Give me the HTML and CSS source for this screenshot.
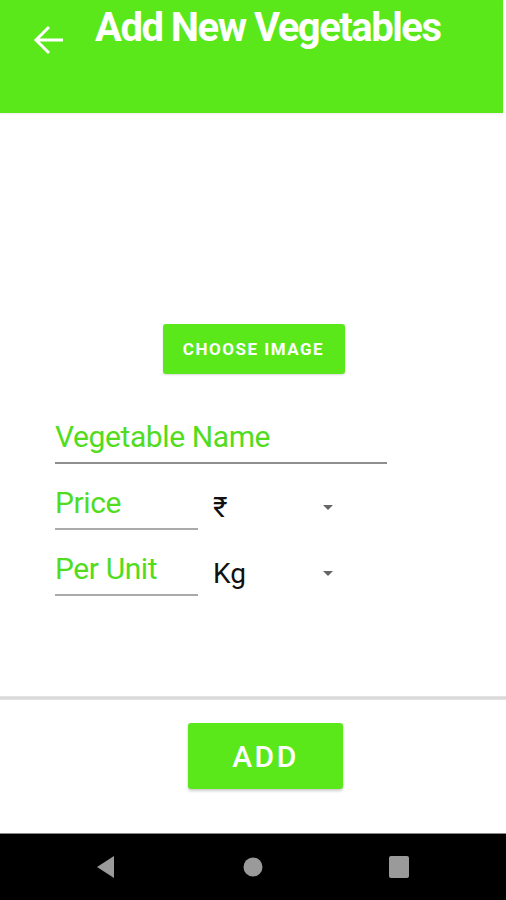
FILE: index.html
```html
<!DOCTYPE html>
<html>
<head>
<meta charset="utf-8">
<link rel="stylesheet" href="styles.css">
</head>
<body>
<div class="screen">
  <header class="appbar">
    <svg class="back" width="32" height="32" viewBox="0 0 32 32"><path d="M30 16H3M16 3L3 16l13 13" fill="none" stroke="#fff" stroke-width="3" stroke-linecap="butt" stroke-linejoin="miter"/></svg>
    <h1 class="title">Add New Vegetables</h1>
  </header>
  <main class="content">
    <div class="choose-wrap"><button class="choose">CHOOSE IMAGE</button></div>
    <div class="form">
      <div class="field wide">Vegetable Name</div>
      <div class="row">
        <div class="field short">Price</div>
        <div class="spinner"><span class="val">₹</span><span class="caret"></span></div>
      </div>
      <div class="row">
        <div class="field short">Per Unit</div>
        <div class="spinner"><span class="val">Kg</span><span class="caret"></span></div>
      </div>
    </div>
  </main>
  <div class="divider"></div>
  <footer class="actions">
    <button class="add">ADD</button>
  </footer>
  <nav class="navbar">
    <svg width="20" height="24" viewBox="0 0 20 24"><path d="M18 1v22L1 12z" fill="#9a9a9a"/></svg>
    <svg width="20" height="20" viewBox="0 0 20 20"><circle cx="10" cy="10" r="9.5" fill="#9a9a9a"/></svg>
    <svg width="20" height="22" viewBox="0 0 20 22"><rect x="0" y="0" width="20" height="22" rx="2" fill="#9a9a9a"/></svg>
  </nav>
</div>
</body>
</html>
```
FILE: styles.css
```css
html, body { margin: 0; padding: 0; background: #fff; }
body { font-family: Roboto, "Noto Sans", sans-serif; }
.screen { width: 506px; height: 900px; display: flex; flex-direction: column; overflow: hidden; }
.appbar {
  height: 113px; width: 503px; background: #5ae81b; flex: none;
  display: flex; align-items: flex-start; box-sizing: border-box;
  box-shadow: 0 1px 2px rgba(0,0,0,0.08);
}
.back { margin: 24px 0 0 33px; flex: none; }
.title {
  margin: 5px 0 0 30px; color: #fff; font-weight: 700; font-size: 40px;
  line-height: 46px; letter-spacing: -1.5px;
}
.content { flex: 1; display: flex; flex-direction: column; }
.choose-wrap { display: flex; justify-content: center; padding-top: 211px; }
.choose {
  width: 182px; height: 50px; background: #5ae81b; border: none; border-radius: 3px;
  color: #fff; font-family: Roboto, sans-serif; font-weight: 700; font-size: 17px;
  letter-spacing: 1.5px; padding: 0; margin-left: 1px;
  box-shadow: 0 1px 2px rgba(0,0,0,0.15);
}
.form { padding: 47px 0 0 55px; display: flex; flex-direction: column; gap: 23px; }
.field {
  color: #52dc1e; font-size: 30px; line-height: 32px; padding-bottom: 9px;
  letter-spacing: -0.4px;
  border-bottom: 2px solid #8e8e8e; box-sizing: content-box;
}
.field.wide { width: 332px; }
.field.short { width: 143px; border-bottom-color: #aaa; }
.row { display: flex; align-items: flex-start; }
.spinner { display: flex; align-items: center; width: 126px; margin-left: 15px; height: 38px; padding-top: 2px; }
.val { color: #111; font-size: 28px; line-height: 32px; flex: 1; }
.caret {
  width: 0; height: 0; border-left: 5px solid transparent; border-right: 5px solid transparent;
  border-top: 5px solid #666; margin-right: 6px; margin-bottom: 2px;
}
.divider { height: 4px; background: linear-gradient(#e6e6e6, #d6d6d6, #e8e8e8); flex: none; margin-top: -4px; }
.actions { height: 133px; flex: none; padding-top: 23px; box-sizing: border-box; }
.add {
  margin-left: 188px; width: 155px; height: 66px; background: #5ae81b; border: none;
  border-radius: 3px; color: #fff; font-family: Roboto, sans-serif; font-weight: 500;
  font-size: 30px; letter-spacing: 2.5px; padding: 0;
  box-shadow: 0 2px 3px rgba(0,0,0,0.2);
}
.navbar {
  height: 67px; flex: none; background: #000; border-top: 1px solid #888; box-sizing: border-box;
  display: flex; align-items: center; padding: 0 97px 0 96px; justify-content: space-between;
}
```
